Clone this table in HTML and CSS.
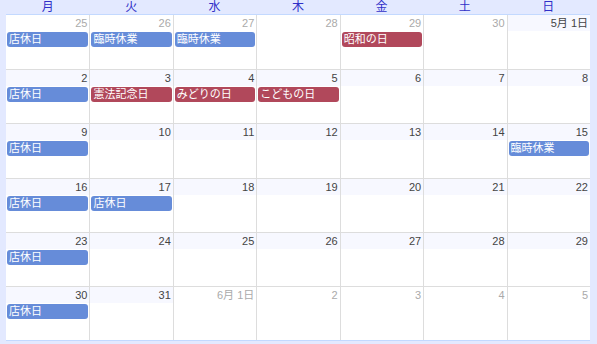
FILE: index.html
```html
<!DOCTYPE html>
<html lang="ja">
<head>
<meta charset="utf-8">
<title>カレンダー</title>
<link rel="stylesheet" href="styles.css">
</head>
<body>
<div class="cal">
  <div class="weekdays">
    <div class="wd">月</div><div class="wd">火</div><div class="wd">水</div><div class="wd">木</div><div class="wd">金</div><div class="wd">土</div><div class="wd">日</div>
  </div>
  <div class="month">
    <div class="cell other"><div class="date">25</div><div class="ev blue">店休日</div></div>
    <div class="cell other"><div class="date">26</div><div class="ev blue">臨時休業</div></div>
    <div class="cell other"><div class="date">27</div><div class="ev blue">臨時休業</div></div>
    <div class="cell other"><div class="date">28</div></div>
    <div class="cell other"><div class="date">29</div><div class="ev red">昭和の日</div></div>
    <div class="cell other"><div class="date">30</div></div>
    <div class="cell"><div class="date">5月 1日</div></div>

    <div class="cell top"><div class="date">2</div><div class="ev blue">店休日</div></div>
    <div class="cell top"><div class="date">3</div><div class="ev red">憲法記念日</div></div>
    <div class="cell top"><div class="date">4</div><div class="ev red">みどりの日</div></div>
    <div class="cell top"><div class="date">5</div><div class="ev red">こどもの日</div></div>
    <div class="cell top"><div class="date">6</div></div>
    <div class="cell top"><div class="date">7</div></div>
    <div class="cell top"><div class="date">8</div></div>

    <div class="cell top"><div class="date">9</div><div class="ev blue">店休日</div></div>
    <div class="cell top"><div class="date">10</div></div>
    <div class="cell top"><div class="date">11</div></div>
    <div class="cell top"><div class="date">12</div></div>
    <div class="cell top"><div class="date">13</div></div>
    <div class="cell top"><div class="date">14</div></div>
    <div class="cell top"><div class="date">15</div><div class="ev blue">臨時休業</div></div>

    <div class="cell top"><div class="date">16</div><div class="ev blue">店休日</div></div>
    <div class="cell top"><div class="date">17</div><div class="ev blue">店休日</div></div>
    <div class="cell top"><div class="date">18</div></div>
    <div class="cell top"><div class="date">19</div></div>
    <div class="cell top"><div class="date">20</div></div>
    <div class="cell top"><div class="date">21</div></div>
    <div class="cell top"><div class="date">22</div></div>

    <div class="cell top"><div class="date">23</div><div class="ev blue">店休日</div></div>
    <div class="cell top"><div class="date">24</div></div>
    <div class="cell top"><div class="date">25</div></div>
    <div class="cell top"><div class="date">26</div></div>
    <div class="cell top"><div class="date">27</div></div>
    <div class="cell top"><div class="date">28</div></div>
    <div class="cell top"><div class="date">29</div></div>

    <div class="cell top"><div class="date">30</div><div class="ev blue">店休日</div></div>
    <div class="cell top"><div class="date">31</div></div>
    <div class="cell top other"><div class="date">6月 1日</div></div>
    <div class="cell top other"><div class="date">2</div></div>
    <div class="cell top other"><div class="date">3</div></div>
    <div class="cell top other"><div class="date">4</div></div>
    <div class="cell top other"><div class="date">5</div></div>
  </div>
</div>
</body>
</html>
```
FILE: styles.css
```css
html, body {
  margin: 0;
  padding: 0;
  background: #e3e9ff;
  font-family: "Liberation Sans", "Noto Sans CJK JP", sans-serif;
}
.cal {
  width: 584px;
  margin: 0 7px 0 6px;
  padding-bottom: 3px;
}
.weekdays {
  display: grid;
  grid-template-columns: repeat(7, 1fr);
  height: 14px;
}
.wd {
  text-align: center;
  font-size: 12px;
  line-height: 15px;
  color: #3030c8;
}
.month {
  display: grid;
  grid-template-columns: repeat(7, 1fr);
  grid-template-rows: repeat(6, 1fr);
  height: 325px;
  border-top: 1px solid #c3d9ff;
  border-bottom: 1px solid #c3d9ff;
  background: #fff;
}
.cell {
  border-left: 1px solid #dddddd;
  min-width: 0;
  overflow: hidden;
}
.cell:nth-child(7n+1) {
  border-left: none;
}
.cell.top {
  border-top: 1px solid #dddddd;
}
.date {
  height: 16px;
  line-height: 16px;
  font-size: 11px;
  text-align: right;
  padding-right: 2px;
  color: #444;
  background: #f7f8ff;
}
.other .date {
  color: #aaa;
  background: #fff;
}
.ev {
  margin: 1px 1px 0 1px;
  height: 15px;
  line-height: 15px;
  font-size: 11px;
  color: #fff;
  padding-left: 2px;
  border-radius: 3px;
  white-space: nowrap;
  overflow: hidden;
}
.blue { background: #668cd9; }
.red { background: #b1485b; }
```
